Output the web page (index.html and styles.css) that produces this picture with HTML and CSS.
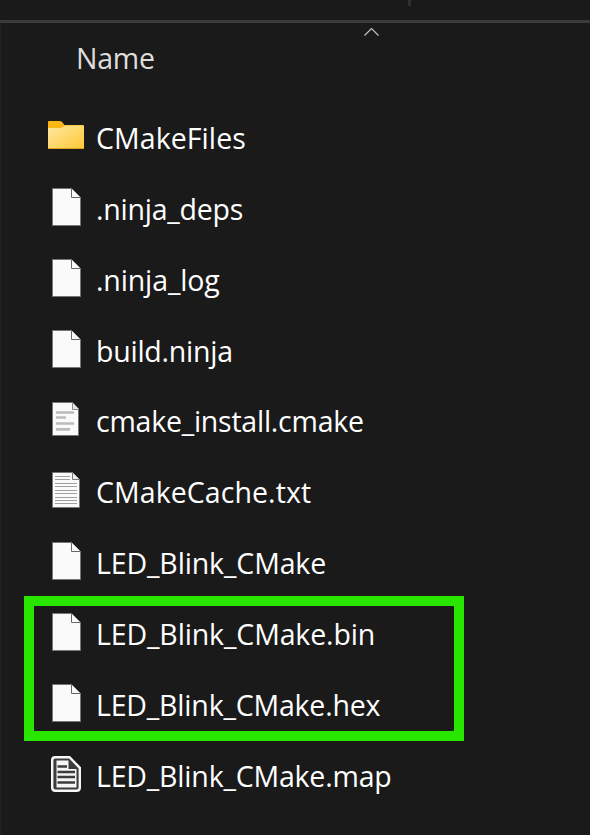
FILE: index.html
```
<!DOCTYPE html>
<html lang="en">
<head>
<meta charset="utf-8">
<title>Files</title>
<link rel="stylesheet" href="styles.css">
</head>
<body>
<svg width="0" height="0" class="defs">
  <defs>
    <linearGradient id="gold" x1="0" y1="0" x2="1" y2="1"><stop offset="0" stop-color="#ffe7a0"/><stop offset="1" stop-color="#ffc937"/></linearGradient>
    <symbol id="file" viewBox="0 0 44 71">
      <path d="M8.5 14.5H27.5L36.5 23.5V51.5H8.5Z" fill="#fafafa" stroke="#777"/>
      <path d="M27.5 14.5V23.5H36.5" fill="#fafafa" stroke="#666"/>
    </symbol>
    <symbol id="script" viewBox="0 0 44 71">
      <path d="M8.5 16.5H28.5L34.5 22.5V49.5H8.5Z" fill="#f9fafb" stroke="#777"/>
      <path d="M28.5 16.5V23.5H34.5" fill="#e8e8e8" stroke="#888"/>
      <path d="M12 26.5H30M12 31.5H22M12 37.500H30M12 43.300H26" stroke="#bcbcbc" stroke-width="2.700"/>
    </symbol>
    <symbol id="text" viewBox="0 0 44 71">
      <path d="M8.5 15.5H28.5L35.5 22.5V50.5H8.5Z" fill="#fafafa" stroke="#777"/>
      <path d="M28.5 15.5V22.5H35.5" fill="#eee" stroke="#777"/>
      <path d="M11 19.5H26M11 22.5H26M11 26.5H33M11 29.5H33M11 33.5H33M11 36.5H33M11 40.5H33M11 43.5H33M11 46.5H33" stroke="#a0a0a0"/>
    </symbol>
  </defs>
</svg>
<header class="toolbar"><span class="divider"></span></header>
<main class="pane">
  <div class="columns">
    <svg class="sort" width="17" height="10" viewBox="0 0 17 10"><path d="M1.5 8.5L8.5 1.5L15.5 8.5" fill="none" stroke="#c4c4c4" stroke-width="1.2"/></svg>
    <span class="heading">Name</span>
  </div>
  <ul class="list">
    <li class="row"><svg class="icon" viewBox="0 0 44 71"><path d="M4 19Q4 18 5 18H16Q17.500 18 18.500 19.500L20.500 22H39Q40 22 40 23V30H4Z" fill="#fbb816"/><path d="M4 25H16Q18 25 19.500 23.500L21 22.500H39Q40 22.500 40 23.500V45Q40 46 39 46H5Q4 46 4 45Z" fill="url(#gold)"/><path d="M4.500 45.500H39.500" stroke="#e6a51f"/></svg><span class="name wide">CMakeFiles</span></li>
    <li class="row"><svg class="icon"><use href="#file"/></svg><span class="name tight">.ninja_deps</span></li>
    <li class="row"><svg class="icon"><use href="#file"/></svg><span class="name snug">.ninja_log</span></li>
    <li class="row short"><svg class="icon"><use href="#file"/></svg><span class="name tight">build.ninja</span></li>
    <li class="row"><svg class="icon"><use href="#script"/></svg><span class="name tight">cmake_install.cmake</span></li>
    <li class="row"><svg class="icon"><use href="#text"/></svg><span class="name wide">CMakeCache.txt</span></li>
    <li class="row"><svg class="icon"><use href="#file"/></svg><span class="name snug">LED_Blink_CMake</span></li>
    <li class="row"><svg class="icon"><use href="#file"/></svg><span class="name snug">LED_Blink_CMake.bin</span></li>
    <li class="row"><svg class="icon"><use href="#file"/></svg><span class="name close">LED_Blink_CMake.hex</span></li>
    <li class="row"><svg class="icon" viewBox="0 0 44 71"><path d="M11.200 16.200H25.500L35.800 26.800V46.800Q35.800 49.800 32.500 49.800H11.500Q8.200 49.800 8.200 46.800V19.200Q8.200 16.200 11.200 16.200Z" fill="#3c3c3c" stroke="#f7f7f7" stroke-width="2.400"/><path d="M12.500 19.500H24.500V28H32.500V46.500H12.500Z" fill="#f5f5f5"/><path d="M13.500 25.500H23M13.500 31H31M13.500 36H31M13.500 41.500H31" stroke="#3c3c3c" stroke-width="2.400"/></svg><span class="name close">LED_Blink_CMake.map</span></li>
  </ul>
  <div class="highlight"></div>
</main>
</body>
</html>
```
FILE: styles.css
```
* { box-sizing: border-box; }
body { margin: 0; width: 590px; height: 835px; overflow: hidden; background: #1a1a1a; color: #fff; font-family: "Open Sans", "Noto Sans", sans-serif; font-size: 28.5px; }
.defs { position: absolute; }
.toolbar { height: 23px; border-bottom: 3px solid #3b3b3b; padding-left: 408px; }
.divider { display: block; width: 3px; height: 6px; background: #303030; border-radius: 0 0 1px 1px; }
.pane { height: 812px; border-left: 1px solid #222; }
.columns { height: 80px; padding-top: 4px; }
.sort { display: block; margin-left: 362px; }
.heading { display: block; margin: 1px 0 0 75px; line-height: 40px; color: #dedede; letter-spacing: -0.25px; }
.list { list-style: none; margin: 0; padding: 0 0 0 43px; }
.row { display: flex; height: 71px; }
.short { height: 70px; }
.icon { width: 44px; height: 71px; flex: none; }
.name { margin-left: 8px; line-height: 70px; white-space: nowrap; }
.wide { letter-spacing: 0.08px; }
.snug { letter-spacing: -0.13px; }
.close { letter-spacing: -0.19px; }
.tight { letter-spacing: -0.24px; }
.highlight { position: absolute; left: 24px; top: 596px; width: 440px; height: 145px; border: 10px solid #28e600; }
```
